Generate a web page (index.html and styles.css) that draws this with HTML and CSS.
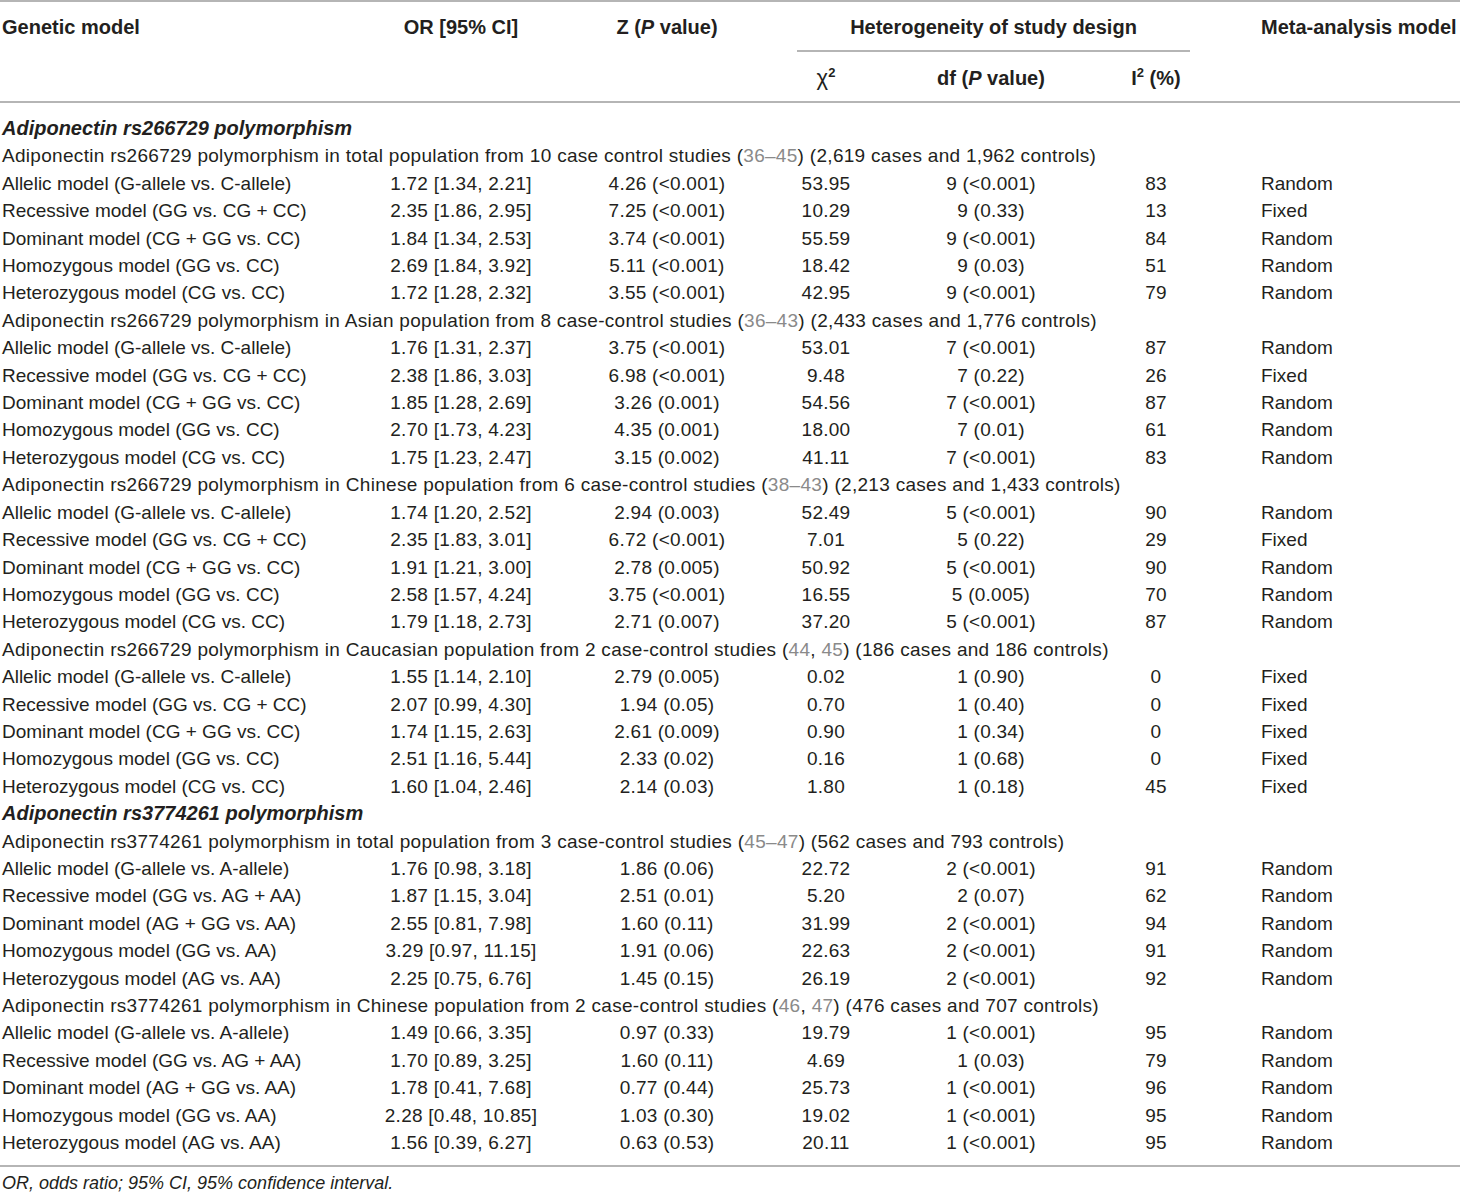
FILE: index.html
```html
<!DOCTYPE html>
<html>
<head>
<meta charset="utf-8">
<link rel="stylesheet" href="styles.css">
</head>
<body>
<table class="tbl">
<colgroup>
<col class="c1"><col class="c2"><col class="c3"><col class="c4"><col class="c5"><col class="c6"><col class="c7">
</colgroup>
<thead>
<tr class="h1">
<th class="left" rowspan="2">Genetic model</th>
<th rowspan="2">OR [95% CI]</th>
<th rowspan="2">Z (<i>P</i> value)</th>
<th colspan="3" class="het"><div class="het-in">Heterogeneity of study design</div></th>
<th class="meta" rowspan="2">Meta-analysis model</th>
</tr>
<tr class="h2">
<th><span class="chi">χ</span><sup>2</sup></th>
<th>df (<i>P</i> value)</th>
<th>I<sup>2</sup> (%)</th>
</tr>
</thead>
<tbody>
<tr class="first"><td colspan="7" class="sec">Adiponectin rs266729 polymorphism</td></tr>
<tr><td colspan="7" class="sub">Adiponectin rs266729 polymorphism in total population from 10 case control studies (<span class="ref">36–45</span>) (2,619 cases and 1,962 controls)</td></tr>
<tr><td>Allelic model (G-allele vs. C-allele)</td><td>1.72 [1.34, 2.21]</td><td>4.26 (&lt;0.001)</td><td>53.95</td><td>9 (&lt;0.001)</td><td>83</td><td class="m">Random</td></tr>
<tr><td>Recessive model (GG vs. CG + CC)</td><td>2.35 [1.86, 2.95]</td><td>7.25 (&lt;0.001)</td><td>10.29</td><td>9 (0.33)</td><td>13</td><td class="m">Fixed</td></tr>
<tr><td>Dominant model (CG + GG vs. CC)</td><td>1.84 [1.34, 2.53]</td><td>3.74 (&lt;0.001)</td><td>55.59</td><td>9 (&lt;0.001)</td><td>84</td><td class="m">Random</td></tr>
<tr><td>Homozygous model (GG vs. CC)</td><td>2.69 [1.84, 3.92]</td><td>5.11 (&lt;0.001)</td><td>18.42</td><td>9 (0.03)</td><td>51</td><td class="m">Random</td></tr>
<tr><td>Heterozygous model (CG vs. CC)</td><td>1.72 [1.28, 2.32]</td><td>3.55 (&lt;0.001)</td><td>42.95</td><td>9 (&lt;0.001)</td><td>79</td><td class="m">Random</td></tr>
<tr><td colspan="7" class="sub">Adiponectin rs266729 polymorphism in Asian population from 8 case-control studies (<span class="ref">36–43</span>) (2,433 cases and 1,776 controls)</td></tr>
<tr><td>Allelic model (G-allele vs. C-allele)</td><td>1.76 [1.31, 2.37]</td><td>3.75 (&lt;0.001)</td><td>53.01</td><td>7 (&lt;0.001)</td><td>87</td><td class="m">Random</td></tr>
<tr><td>Recessive model (GG vs. CG + CC)</td><td>2.38 [1.86, 3.03]</td><td>6.98 (&lt;0.001)</td><td>9.48</td><td>7 (0.22)</td><td>26</td><td class="m">Fixed</td></tr>
<tr><td>Dominant model (CG + GG vs. CC)</td><td>1.85 [1.28, 2.69]</td><td>3.26 (0.001)</td><td>54.56</td><td>7 (&lt;0.001)</td><td>87</td><td class="m">Random</td></tr>
<tr><td>Homozygous model (GG vs. CC)</td><td>2.70 [1.73, 4.23]</td><td>4.35 (0.001)</td><td>18.00</td><td>7 (0.01)</td><td>61</td><td class="m">Random</td></tr>
<tr><td>Heterozygous model (CG vs. CC)</td><td>1.75 [1.23, 2.47]</td><td>3.15 (0.002)</td><td>41.11</td><td>7 (&lt;0.001)</td><td>83</td><td class="m">Random</td></tr>
<tr><td colspan="7" class="sub">Adiponectin rs266729 polymorphism in Chinese population from 6 case-control studies (<span class="ref">38–43</span>) (2,213 cases and 1,433 controls)</td></tr>
<tr><td>Allelic model (G-allele vs. C-allele)</td><td>1.74 [1.20, 2.52]</td><td>2.94 (0.003)</td><td>52.49</td><td>5 (&lt;0.001)</td><td>90</td><td class="m">Random</td></tr>
<tr><td>Recessive model (GG vs. CG + CC)</td><td>2.35 [1.83, 3.01]</td><td>6.72 (&lt;0.001)</td><td>7.01</td><td>5 (0.22)</td><td>29</td><td class="m">Fixed</td></tr>
<tr><td>Dominant model (CG + GG vs. CC)</td><td>1.91 [1.21, 3.00]</td><td>2.78 (0.005)</td><td>50.92</td><td>5 (&lt;0.001)</td><td>90</td><td class="m">Random</td></tr>
<tr><td>Homozygous model (GG vs. CC)</td><td>2.58 [1.57, 4.24]</td><td>3.75 (&lt;0.001)</td><td>16.55</td><td>5 (0.005)</td><td>70</td><td class="m">Random</td></tr>
<tr><td>Heterozygous model (CG vs. CC)</td><td>1.79 [1.18, 2.73]</td><td>2.71 (0.007)</td><td>37.20</td><td>5 (&lt;0.001)</td><td>87</td><td class="m">Random</td></tr>
<tr><td colspan="7" class="sub">Adiponectin rs266729 polymorphism in Caucasian population from 2 case-control studies (<span class="ref">44</span>, <span class="ref">45</span>) (186 cases and 186 controls)</td></tr>
<tr><td>Allelic model (G-allele vs. C-allele)</td><td>1.55 [1.14, 2.10]</td><td>2.79 (0.005)</td><td>0.02</td><td>1 (0.90)</td><td>0</td><td class="m">Fixed</td></tr>
<tr><td>Recessive model (GG vs. CG + CC)</td><td>2.07 [0.99, 4.30]</td><td>1.94 (0.05)</td><td>0.70</td><td>1 (0.40)</td><td>0</td><td class="m">Fixed</td></tr>
<tr><td>Dominant model (CG + GG vs. CC)</td><td>1.74 [1.15, 2.63]</td><td>2.61 (0.009)</td><td>0.90</td><td>1 (0.34)</td><td>0</td><td class="m">Fixed</td></tr>
<tr><td>Homozygous model (GG vs. CC)</td><td>2.51 [1.16, 5.44]</td><td>2.33 (0.02)</td><td>0.16</td><td>1 (0.68)</td><td>0</td><td class="m">Fixed</td></tr>
<tr><td>Heterozygous model (CG vs. CC)</td><td>1.60 [1.04, 2.46]</td><td>2.14 (0.03)</td><td>1.80</td><td>1 (0.18)</td><td>45</td><td class="m">Fixed</td></tr>
<tr><td colspan="7" class="sec">Adiponectin rs3774261 polymorphism</td></tr>
<tr><td colspan="7" class="sub">Adiponectin rs3774261 polymorphism in total population from 3 case-control studies (<span class="ref">45–47</span>) (562 cases and 793 controls)</td></tr>
<tr><td>Allelic model (G-allele vs. A-allele)</td><td>1.76 [0.98, 3.18]</td><td>1.86 (0.06)</td><td>22.72</td><td>2 (&lt;0.001)</td><td>91</td><td class="m">Random</td></tr>
<tr><td>Recessive model (GG vs. AG + AA)</td><td>1.87 [1.15, 3.04]</td><td>2.51 (0.01)</td><td>5.20</td><td>2 (0.07)</td><td>62</td><td class="m">Random</td></tr>
<tr><td>Dominant model (AG + GG vs. AA)</td><td>2.55 [0.81, 7.98]</td><td>1.60 (0.11)</td><td>31.99</td><td>2 (&lt;0.001)</td><td>94</td><td class="m">Random</td></tr>
<tr><td>Homozygous model (GG vs. AA)</td><td>3.29 [0.97, 11.15]</td><td>1.91 (0.06)</td><td>22.63</td><td>2 (&lt;0.001)</td><td>91</td><td class="m">Random</td></tr>
<tr><td>Heterozygous model (AG vs. AA)</td><td>2.25 [0.75, 6.76]</td><td>1.45 (0.15)</td><td>26.19</td><td>2 (&lt;0.001)</td><td>92</td><td class="m">Random</td></tr>
<tr><td colspan="7" class="sub">Adiponectin rs3774261 polymorphism in Chinese population from 2 case-control studies (<span class="ref">46</span>, <span class="ref">47</span>) (476 cases and 707 controls)</td></tr>
<tr><td>Allelic model (G-allele vs. A-allele)</td><td>1.49 [0.66, 3.35]</td><td>0.97 (0.33)</td><td>19.79</td><td>1 (&lt;0.001)</td><td>95</td><td class="m">Random</td></tr>
<tr><td>Recessive model (GG vs. AG + AA)</td><td>1.70 [0.89, 3.25]</td><td>1.60 (0.11)</td><td>4.69</td><td>1 (0.03)</td><td>79</td><td class="m">Random</td></tr>
<tr><td>Dominant model (AG + GG vs. AA)</td><td>1.78 [0.41, 7.68]</td><td>0.77 (0.44)</td><td>25.73</td><td>1 (&lt;0.001)</td><td>96</td><td class="m">Random</td></tr>
<tr><td>Homozygous model (GG vs. AA)</td><td>2.28 [0.48, 10.85]</td><td>1.03 (0.30)</td><td>19.02</td><td>1 (&lt;0.001)</td><td>95</td><td class="m">Random</td></tr>
<tr class="last"><td>Heterozygous model (AG vs. AA)</td><td>1.56 [0.39, 6.27]</td><td>0.63 (0.53)</td><td>20.11</td><td>1 (&lt;0.001)</td><td>95</td><td class="m">Random</td></tr>
</tbody>
</table>
<p class="note">OR, odds ratio; 95% CI, 95% confidence interval.</p>
</body>
</html>
```
FILE: styles.css
```css
html, body {
  margin: 0;
  padding: 0;
  background: #fff;
}
body {
  font-family: "Liberation Sans", Arial, Helvetica, sans-serif;
  color: #231f20;
  font-size: 19px;
}
.tbl {
  width: 1460px;
  table-layout: fixed;
  border-collapse: collapse;
  border-top: 2px solid #b5b5b5;
}
.c1 { width: 380px; }
.c2 { width: 162px; }
.c3 { width: 250px; }
.c4 { width: 68px; }
.c5 { width: 262px; }
.c6 { width: 68px; }
.c7 { width: 270px; }
th {
  font-size: 20px;
  font-weight: bold;
  text-align: center;
  padding: 0;
  line-height: 24px;
  white-space: nowrap;
}
th.left { text-align: left; padding-left: 2px; }
th.meta { text-align: left; padding-left: 71px; }
thead tr.h1 th { vertical-align: top; padding-top: 13px; height: 34px; }
thead tr.h1 th.het { padding-top: 13px; height: 34px; padding-bottom: 0; vertical-align: top; }
.het-in {
  margin-left: 5px;
  padding-bottom: 11px;
  border-bottom: 2px solid #b5b5b5;
}
thead tr.h2 th { height: 47px; vertical-align: middle; padding-top: 2px; }
thead { border-bottom: 2px solid #b5b5b5; }
.chi { font-weight: normal; font-size: 22px; }
sup {
  font-size: 13px;
  line-height: 0;
  vertical-align: 8px;
}
td {
  padding: 0;
  height: 27.4px;
  line-height: 27.4px;
  text-align: center;
  white-space: nowrap;
  letter-spacing: 0.25px;
}
td:first-child { text-align: left; padding-left: 2px; letter-spacing: 0; }
td.m { text-align: left; padding-left: 71px; letter-spacing: 0; }
td.sec { font-weight: bold; font-style: italic; font-size: 20px; letter-spacing: 0; }
td.sub { text-align: left; letter-spacing: 0.3px; }
.ref { color: #8a8a8a; }
tr.first td { padding-top: 12px; }
tr.last td { padding-bottom: 9px; }
tbody { border-bottom: 2px solid #b5b5b5; }
.note {
  margin: 0;
  padding-top: 3px;
  font-size: 18px;
  font-style: italic;
  line-height: 27px;
  padding-left: 2px;
}
```
